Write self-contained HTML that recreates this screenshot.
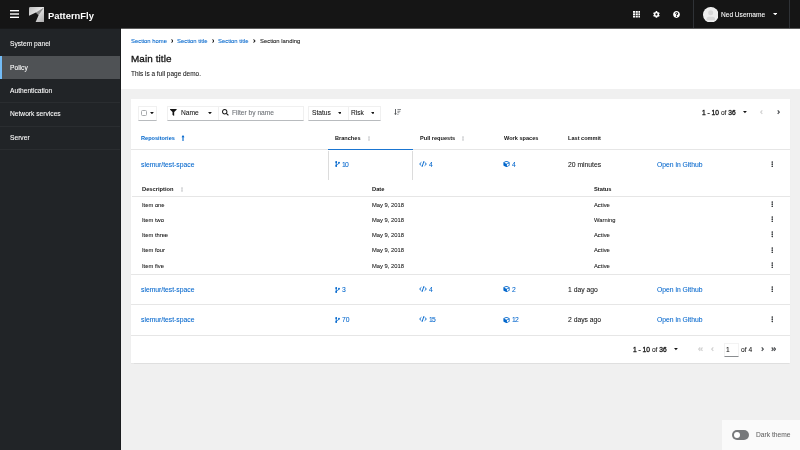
<!DOCTYPE html>
<html><head><meta charset="utf-8">
<style>
*{margin:0;padding:0;box-sizing:border-box}
html,body{width:800px;height:450px;overflow:hidden;-webkit-font-smoothing:antialiased;background:#f0f0f0;font-family:"Liberation Sans",sans-serif;color:#151515}
.a{position:absolute}
.t{position:absolute;white-space:nowrap;line-height:1;will-change:transform;-webkit-text-stroke:0.07px currentColor}
.b{font-weight:700;-webkit-text-stroke:0}
.lk{color:#0066cc}
svg{position:absolute;display:block}
#hdr{left:0;top:0;width:800px;height:28px;background:#151515}
#side{left:0;top:28px;width:121px;height:422px;background:#212427}
#sec{left:121px;top:28px;width:679px;height:61px;background:#fff}
#card{left:131px;top:99px;width:659px;height:264px;background:#fff;box-shadow:0 0.5px 1px rgba(3,3,3,.07),0 0 0.5px rgba(3,3,3,.05)}
.sb{color:#fff;font-size:6.67px}
.sep{position:absolute;left:0;width:120px;height:1px;background:#2a2d30}
.tog{position:absolute;border:0.5px solid #f0f0f0;border-bottom:1px solid #b8bbbe;height:15px}
.th{font-size:5.6px;font-weight:700;-webkit-text-stroke:0!important}
.row{font-size:6.77px}
.hl{position:absolute;height:1px;background:#e6e6e6}
.sm{font-size:5.8px}
.md{-webkit-text-stroke:0.3px currentColor}
</style></head><body>
<!-- header -->
<div id="hdr" class="a">
  <svg style="left:10px;top:10px" width="9" height="8" viewBox="0 0 9 8"><rect x="0" y="0" width="9" height="1.4" fill="#fff"/><rect x="0" y="3.3" width="9" height="1.4" fill="#fff"/><rect x="0" y="6.6" width="9" height="1.4" fill="#fff"/></svg>
  <svg style="left:28.6px;top:6.9px" width="15.7" height="15.4" viewBox="0 0 15.7 15.4">
    <defs><linearGradient id="lg" x1="0" y1="0" x2="1" y2="1"><stop offset="0" stop-color="#b9b9b9"/><stop offset="0.45" stop-color="#e6e6e6"/><stop offset="1" stop-color="#a8a8a8"/></linearGradient></defs>
    <rect x="0" y="0" width="15.7" height="15.4" rx="1.2" fill="url(#lg)"/>
    <path d="M6.9 5.4L15 0.5 9.6 8.3Z" fill="#8c8c8c"/>
    <path d="M-0.1 8.8L6.9 5.4 9.6 8.3 6.4 15.5H-0.1Z" fill="#151515"/>
  </svg>
  <div class="t b" style="left:47.9px;top:11.2px;font-size:9.4px;color:#fff">PatternFly</div>
  <svg style="left:632.5px;top:11px" width="7.5" height="6.5" viewBox="0 0 7.5 6.5" fill="#fff">
    <rect x="0" y="0" width="2.1" height="1.8"/><rect x="2.7" y="0" width="2.1" height="1.8"/><rect x="5.4" y="0" width="2.1" height="1.8"/>
    <rect x="0" y="2.35" width="2.1" height="1.8"/><rect x="2.7" y="2.35" width="2.1" height="1.8"/><rect x="5.4" y="2.35" width="2.1" height="1.8"/>
    <rect x="0" y="4.7" width="2.1" height="1.8"/><rect x="2.7" y="4.7" width="2.1" height="1.8"/><rect x="5.4" y="4.7" width="2.1" height="1.8"/>
  </svg>
  <svg style="left:652.8px;top:10.8px" width="6.9" height="6.9" viewBox="0 0 512 512"><path fill="#fff" d="M487.4 315.7l-42.6-24.6c4.3-23.2 4.3-47 0-70.2l42.6-24.6c4.9-2.8 7.1-8.6 5.5-14-11.1-35.6-30-67.8-54.7-94.6-3.8-4.1-10-5.1-14.8-2.3L380.8 110c-17.9-15.4-38.5-27.3-60.8-35.1V25.8c0-5.6-3.9-10.5-9.4-11.7-36.7-8.2-74.3-7.8-109.2 0-5.5 1.2-9.4 6.1-9.4 11.7V75c-22.2 7.9-42.8 19.8-60.8 35.1L88.7 85.5c-4.9-2.8-11-1.9-14.8 2.3-24.7 26.7-43.6 58.9-54.7 94.6-1.7 5.4.6 11.2 5.5 14L67.3 221c-4.3 23.2-4.3 47 0 70.2l-42.6 24.6c-4.9 2.8-7.1 8.600-5.5 14 11.1 35.6 30 67.8 54.7 94.6 3.8 4.1 10 5.1 14.8 2.3l42.6-24.6c17.9 15.4 38.5 27.3 60.8 35.1v49.2c0 5.6 3.9 10.5 9.4 11.7 36.7 8.2 74.3 7.8 109.2 0 5.5-1.2 9.4-6.1 9.4-11.7v-49.2c22.2-7.9 42.8-19.8 60.8-35.1l42.6 24.6c4.9 2.8 11 1.9 14.8-2.3 24.7-26.7 43.6-58.9 54.7-94.6 1.5-5.5-.7-11.3-5.6-14.1zM256 336c-44.1 0-80-35.9-80-80s35.9-80 80-80 80 35.9 80 80-35.9 80-80 80z"/></svg>
  <svg style="left:673px;top:11px" width="7" height="7" viewBox="0 0 512 512"><path fill="#fff" d="M504 256c0 136.997-111.043 248-248 248S8 392.997 8 256C8 119.083 119.043 8 256 8s248 111.083 248 248zM262.655 90c-54.497 0-89.255 22.957-116.549 63.758-3.536 5.286-2.353 12.415 2.715 16.258l34.699 26.31c5.205 3.947 12.621 3.008 16.665-2.122 17.864-22.658 30.113-35.797 57.303-35.797 20.429 0 45.698 13.148 45.698 32.958 0 14.976-12.363 22.667-32.534 33.976C247.128 238.528 216 254.941 216 296v4c0 6.627 5.373 12 12 12h56c6.627 0 12-5.373 12-12v-1.333c0-28.462 83.186-29.647 83.186-106.667 0-58.002-60.165-102-116.531-102zM256 338c-25.365 0-46 20.635-46 46 0 25.364 20.635 46 46 46s46-20.636 46-46c0-25.365-20.635-46-46-46z"/></svg>
  <div class="a" style="left:693px;top:0;width:0.6px;height:28px;background:#2f3236"></div>
  <div class="a" style="left:789px;top:0;width:0.6px;height:28px;background:#2f3236"></div>
  <svg style="left:702.7px;top:6.5px" width="15.6" height="15.6" viewBox="0 0 36 36"><circle cx="18" cy="18" r="18" fill="#f5f5f5"/><circle cx="18" cy="18" r="16.5" fill="#ededed"/><circle cx="17.7" cy="13.5" r="5.8" fill="#d8d8d8"/><path d="M8 30.5c0-6 2-8 5-8h10c3 0 5 2 5 8z" fill="#d8d8d8"/></svg>
  <div class="t" style="left:721.4px;top:12px;font-size:6.57px;color:#fff">Ned Username</div>
  <svg style="left:772.5px;top:13px" width="4.5" height="2.4" viewBox="0 0 10 5"><path d="M0 0h10L5 5z" fill="#fff"/></svg>
</div>
<div class="a" style="left:0;top:28px;width:800px;height:1px;background:rgba(21,21,21,.7);z-index:5"></div>
<!-- sidebar -->
<div id="side" class="a">
  <div class="a" style="left:0;top:27.8px;width:121px;height:23.3px;background:#4f5255"></div>
  <div class="a" style="left:0;top:27.8px;width:2px;height:23.3px;background:#73bcf7"></div>
  <div class="sep" style="top:73.6px"></div>
  <div class="sep" style="top:97.6px"></div>
  <div class="sep" style="top:121.2px"></div>
  <div class="a" style="left:120px;top:0;width:1px;height:422px;background:#1a1c1e"></div>
</div>
<div class="t sb" style="left:9.8px;top:41.30px">System panel</div>
<div class="t sb" style="left:9.8px;top:64.60px">Policy</div>
<div class="t sb" style="left:9.8px;top:88.00px">Authentication</div>
<div class="t sb" style="left:9.8px;top:111.30px">Network services</div>
<div class="t sb" style="left:9.8px;top:134.70px">Server</div>
<!-- page section -->
<div id="sec" class="a"></div>
<div class="t lk" style="left:130.6px;top:38.5px;font-size:5.9px">Section home</div>
<div class="t lk" style="left:176.9px;top:38.5px;font-size:5.9px">Section title</div>
<div class="t lk" style="left:218.2px;top:38.5px;font-size:5.9px">Section title</div>
<div class="t" style="left:259.5px;top:38.5px;font-size:5.9px">Section landing</div>
<svg style="left:170.6px;top:39.2px" width="2.8" height="4" viewBox="0 0 256 350"><path fill="#151515" d="M224.3 192l-136 136c-9.4 9.4-24.6 9.4-33.9 0l-22.6-22.6c-9.4-9.4-9.4-24.6 0-33.9l96.4-96.4-96.4-96.4c-9.4-9.4-9.4-24.6 0-33.9L54.3 22c9.4-9.4 24.6-9.4 33.9 0l136 136c9.5 9.4 9.5 24.6.1 34z"/></svg>
<svg style="left:211.6px;top:39.2px" width="2.8" height="4" viewBox="0 0 256 350"><path fill="#151515" d="M224.3 192l-136 136c-9.4 9.4-24.6 9.4-33.9 0l-22.6-22.6c-9.4-9.4-9.4-24.6 0-33.9l96.4-96.4-96.4-96.4c-9.4-9.4-9.4-24.6 0-33.9L54.3 22c9.4-9.4 24.6-9.4 33.9 0l136 136c9.5 9.4 9.5 24.6.1 34z"/></svg>
<svg style="left:253px;top:39.2px" width="2.8" height="4" viewBox="0 0 256 350"><path fill="#151515" d="M224.3 192l-136 136c-9.4 9.4-24.6 9.4-33.9 0l-22.6-22.6c-9.4-9.4-9.4-24.6 0-33.9l96.4-96.4-96.4-96.4c-9.4-9.4-9.4-24.6 0-33.9L54.3 22c9.4-9.4 24.6-9.4 33.9 0l136 136c9.5 9.4 9.5 24.6.1 34z"/></svg>
<div class="t" style="left:131.1px;top:54px;font-size:9.9px;-webkit-text-stroke:0.32px #151515;letter-spacing:0.1px">Main title</div>
<div class="t" style="left:131px;top:70.7px;font-size:6.46px">This is a full page demo.</div>
<!-- card -->
<div id="card" class="a"></div>
<div class="tog" style="left:137.5px;top:105.5px;width:19.5px"></div>
<div class="a" style="left:140.5px;top:110.2px;width:6.2px;height:6px;border:0.6px solid #a8abae;border-radius:1.5px;background:#fff"></div>
<svg style="left:149.9px;top:111.5px" width="3.9" height="2.3" viewBox="0 0 10 6"><path d="M0 0h10L5 6z" fill="#151515"/></svg>
<div class="tog" style="left:167.2px;top:105.5px;width:137.3px"></div>
<div class="a" style="left:218.2px;top:105.5px;width:0.4px;height:14px;background:#f0f0f0"></div>
<svg style="left:170.2px;top:108.9px" width="6.7" height="6.9" viewBox="0 0 512 512"><path fill="#151515" d="M487.976 0H24.028C2.71 0-8.047 25.866 7.058 40.971L192 225.941V432c0 7.831 3.821 15.170 10.237 19.662l80 55.980C298.020 518.690 320 507.493 320 487.980V225.941l184.947-184.970C520.021 25.896 509.338 0 487.976 0z"/></svg>
<div class="t" style="left:180.5px;top:110.3px;font-size:6.67px">Name</div>
<svg style="left:208px;top:111.6px" width="3.9" height="2.3" viewBox="0 0 10 6"><path d="M0 0h10L5 6z" fill="#151515"/></svg>
<svg style="left:222px;top:109px" width="6.7" height="6.7" viewBox="0 0 512 512"><path fill="#151515" d="M505 442.7L405.3 343c-4.5-4.5-10.6-7-17-7H372c27.6-35.3 44-79.7 44-128C416 93.1 322.9 0 208 0S0 93.1 0 208s93.1 208 208 208c48.3 0 92.7-16.4 128-44v16.3c0 6.4 2.5 12.5 7 17l99.7 99.7c9.4 9.4 24.6 9.4 33.900 0l28.3-28.3c9.4-9.4 9.4-24.6.1-34zM208 336c-70.7 0-128-57.2-128-128 0-70.7 57.200-128 128-128 70.7 0 128 57.2 128 128 0 70.7-57.2 128-128 128z"/></svg>
<div class="t" style="left:231.7px;top:110.3px;font-size:6.63px;color:#6a6e73">Filter by name</div>
<div class="tog" style="left:308.2px;top:105.5px;width:72.5px"></div>
<div class="a" style="left:348px;top:105.5px;width:0.4px;height:14px;background:#f0f0f0"></div>
<div class="t" style="left:311.7px;top:110.3px;font-size:6.67px">Status</div>
<svg style="left:337.6px;top:111.6px" width="3.9" height="2.3" viewBox="0 0 10 6"><path d="M0 0h10L5 6z" fill="#151515"/></svg>
<div class="t" style="left:351.3px;top:110.3px;font-size:6.67px">Risk</div>
<svg style="left:370.5px;top:111.6px" width="3.9" height="2.3" viewBox="0 0 10 6"><path d="M0 0h10L5 6z" fill="#151515"/></svg>
<svg style="left:393.8px;top:109px" width="7.4" height="6" viewBox="0 0 7.4 6"><path d="M1.05 0h0.9v4.5H3L1.5 6 0 4.5h1.05z" fill="#4f5255"/><path d="M3.4 0h4v1.1h-4zM3.4 1.65h3v1.05h-3zM3.4 3.3h2v1.05h-2zM3.4 4.9h1v1.05h-1z" fill="#8a8d90"/></svg>
<div class="t" style="left:702px;top:110.3px;font-size:6.67px"><span class="md">1 - 10</span> of <span class="md">36</span></div>
<svg style="left:742.9px;top:111.3px" width="3.9" height="2.4" viewBox="0 0 10 6"><path d="M0 0h10L5 6z" fill="#151515"/></svg>
<svg style="left:760.2px;top:110.3px" width="3" height="4.4" viewBox="0 0 6 8.8"><path d="M4.6 0.9L1.4 4.4 4.6 7.9" stroke="#d2d2d2" stroke-width="2.5" fill="none"/></svg>
<svg style="left:776.9px;top:110.3px" width="3" height="4.4" viewBox="0 0 6 8.8"><path d="M1.4 0.9L4.6 4.4 1.4 7.9" stroke="#4f5255" stroke-width="2.5" fill="none"/></svg>
<div class="t th lk" style="left:141px;top:136.00px">Repositories</div>
<svg style="left:180px;top:134.7px" width="6" height="6" viewBox="0 0 6 6"><path d="M3 0L4.5 2.3H1.5z" fill="#0066cc"/><rect x="2.45" y="2" width="1.1" height="4" fill="#0066cc"/></svg>
<div class="t th" style="left:335px;top:136.00px">Branches</div>
<svg style="left:368px;top:135.5px" width="2" height="5" viewBox="0 0 4 10"><path d="M2 0L4 2.5H2.8V7.5H4L2 10 0 7.5H1.2V2.5H0z" fill="#b8bbbe"/></svg>
<div class="t th" style="left:419.7px;top:136.00px">Pull requests</div>
<svg style="left:462px;top:135.5px" width="2" height="5" viewBox="0 0 4 10"><path d="M2 0L4 2.5H2.8V7.5H4L2 10 0 7.5H1.2V2.5H0z" fill="#b8bbbe"/></svg>
<div class="t th" style="left:503.7px;top:136.00px">Work spaces</div>
<div class="t th" style="left:567.5px;top:136.00px">Last commit</div>
<div class="hl" style="left:131px;top:149px;width:659px"></div>
<div class="t row lk" style="left:141px;top:161.94px">siemur/test-space</div>
<svg style="left:334.8px;top:161.40px" width="5.2" height="6" viewBox="0 0 10 12"><g fill="#0066cc"><circle cx="2.2" cy="1.9" r="1.9"/><circle cx="2.2" cy="10.1" r="1.9"/><circle cx="7.8" cy="3.4" r="1.8"/><rect x="1.25" y="1.9" width="1.9" height="8.2"/></g><path d="M7.8 3.6C7.8 6.5 3.5 6.5 2.2 8.5" fill="none" stroke="#0066cc" stroke-width="1.7"/></svg>
<div class="t row lk" style="left:341.5px;top:161.94px;letter-spacing:-0.7px">10</div>
<svg style="left:419.3px;top:161.10px" width="8" height="6" viewBox="0 0 16 12"><g fill="none" stroke="#0066cc" stroke-width="1.9" stroke-linecap="round" stroke-linejoin="round"><path d="M4.2 3.2L1.2 6 4.2 8.8M11.8 3.2L14.8 6 11.8 8.8M9.6 1L6.4 11"/></g></svg>
<div class="t row lk" style="left:429.3px;top:161.94px">4</div>
<svg style="left:503.1px;top:161.30px" width="7" height="6.2" viewBox="0 0 512 512"><path fill="#0066cc" d="M239.1 6.3l-208 78c-18.7 7-31.1 24.9-31.1 44.9v225.1c0 18.2 10.3 34.8 26.5 42.9l208 104c13.5 6.8 29.4 6.8 42.9 0l208-104c16.3-8.1 26.5-24.8 26.5-42.9V129.300c0-20-12.4-37.9-31.1-44.9l-208-78C262 2.2 250 2.2 239.100 6.3zM256 68.4l192 72v1.1l-192 78-192-78v-1.1l192-72zm32 356V275.5l160-65v133.9l-160 80z"/></svg>
<div class="t row lk" style="left:512.2px;top:161.94px">4</div>
<div class="t row" style="left:567.5px;top:161.94px">20 minutes</div>
<div class="t row lk" style="left:657.1px;top:161.94px">Open in Github</div>
<svg style="left:770.8px;top:160.90px" width="2.6" height="6.4" viewBox="0 0 6 14"><circle cx="3" cy="2" r="2" fill="#3c3f42"/><circle cx="3" cy="7" r="2" fill="#3c3f42"/><circle cx="3" cy="12" r="2" fill="#3c3f42"/></svg>
<div class="a" style="left:328px;top:148.9px;width:84.7px;height:1.6px;background:#1a75d1"></div>
<div class="a" style="left:328px;top:150.5px;width:0.5px;height:29px;background:#dcdcdc"></div>
<div class="a" style="left:412.3px;top:150.5px;width:0.5px;height:29px;background:#dcdcdc"></div>
<div class="t sm b" style="left:142.2px;top:186.90px;font-size:5.73px">Description</div>
<svg style="left:180.6px;top:186.5px" width="2" height="5" viewBox="0 0 4 10"><path d="M2 0L4 2.5H2.8V7.5H4L2 10 0 7.5H1.2V2.5H0z" fill="#b8bbbe"/></svg>
<div class="t sm b" style="left:372.4px;top:186.90px;font-size:5.73px">Date</div>
<div class="t sm b" style="left:593.5px;top:186.90px;font-size:5.73px">Status</div>
<div class="hl" style="left:132px;top:196px;width:658px"></div>
<div class="t sm" style="left:142.2px;top:202.80px">Item one</div>
<div class="t sm" style="left:372.2px;top:202.80px">May 9, 2018</div>
<div class="t sm" style="left:593.5px;top:202.80px">Active</div>
<svg style="left:770.8px;top:200.90px" width="2.6" height="6.4" viewBox="0 0 6 14"><circle cx="3" cy="2" r="2" fill="#3c3f42"/><circle cx="3" cy="7" r="2" fill="#3c3f42"/><circle cx="3" cy="12" r="2" fill="#3c3f42"/></svg>
<div class="t sm" style="left:142.2px;top:217.80px">Item two</div>
<div class="t sm" style="left:372.2px;top:217.80px">May 9, 2018</div>
<div class="t sm" style="left:593.5px;top:217.80px">Warning</div>
<svg style="left:770.8px;top:215.90px" width="2.6" height="6.4" viewBox="0 0 6 14"><circle cx="3" cy="2" r="2" fill="#3c3f42"/><circle cx="3" cy="7" r="2" fill="#3c3f42"/><circle cx="3" cy="12" r="2" fill="#3c3f42"/></svg>
<div class="t sm" style="left:142.2px;top:233.20px">Item three</div>
<div class="t sm" style="left:372.2px;top:233.20px">May 9, 2018</div>
<div class="t sm" style="left:593.5px;top:233.20px">Active</div>
<svg style="left:770.8px;top:231.30px" width="2.6" height="6.4" viewBox="0 0 6 14"><circle cx="3" cy="2" r="2" fill="#3c3f42"/><circle cx="3" cy="7" r="2" fill="#3c3f42"/><circle cx="3" cy="12" r="2" fill="#3c3f42"/></svg>
<div class="t sm" style="left:142.2px;top:248.40px">Item four</div>
<div class="t sm" style="left:372.2px;top:248.40px">May 9, 2018</div>
<div class="t sm" style="left:593.5px;top:248.40px">Active</div>
<svg style="left:770.8px;top:246.50px" width="2.6" height="6.4" viewBox="0 0 6 14"><circle cx="3" cy="2" r="2" fill="#3c3f42"/><circle cx="3" cy="7" r="2" fill="#3c3f42"/><circle cx="3" cy="12" r="2" fill="#3c3f42"/></svg>
<div class="t sm" style="left:142.2px;top:263.90px">Item five</div>
<div class="t sm" style="left:372.2px;top:263.90px">May 9, 2018</div>
<div class="t sm" style="left:593.5px;top:263.90px">Active</div>
<svg style="left:770.8px;top:262.00px" width="2.6" height="6.4" viewBox="0 0 6 14"><circle cx="3" cy="2" r="2" fill="#3c3f42"/><circle cx="3" cy="7" r="2" fill="#3c3f42"/><circle cx="3" cy="12" r="2" fill="#3c3f42"/></svg>
<div class="hl" style="left:131px;top:273.5px;width:659px"></div>
<div class="t row lk" style="left:141px;top:287.04px">siemur/test-space</div>
<svg style="left:334.8px;top:286.50px" width="5.2" height="6" viewBox="0 0 10 12"><g fill="#0066cc"><circle cx="2.2" cy="1.9" r="1.9"/><circle cx="2.2" cy="10.1" r="1.9"/><circle cx="7.8" cy="3.4" r="1.8"/><rect x="1.25" y="1.9" width="1.9" height="8.2"/></g><path d="M7.8 3.6C7.8 6.5 3.5 6.5 2.2 8.5" fill="none" stroke="#0066cc" stroke-width="1.7"/></svg>
<div class="t row lk" style="left:342.1px;top:287.04px">3</div>
<svg style="left:419.3px;top:286.20px" width="8" height="6" viewBox="0 0 16 12"><g fill="none" stroke="#0066cc" stroke-width="1.9" stroke-linecap="round" stroke-linejoin="round"><path d="M4.2 3.2L1.2 6 4.2 8.8M11.8 3.2L14.8 6 11.8 8.8M9.6 1L6.4 11"/></g></svg>
<div class="t row lk" style="left:429.3px;top:287.04px">4</div>
<svg style="left:503.1px;top:286.40px" width="7" height="6.2" viewBox="0 0 512 512"><path fill="#0066cc" d="M239.1 6.3l-208 78c-18.7 7-31.1 24.9-31.1 44.9v225.1c0 18.2 10.3 34.8 26.5 42.9l208 104c13.5 6.8 29.4 6.8 42.9 0l208-104c16.3-8.1 26.5-24.8 26.5-42.9V129.300c0-20-12.4-37.9-31.1-44.9l-208-78C262 2.2 250 2.2 239.100 6.3zM256 68.4l192 72v1.1l-192 78-192-78v-1.1l192-72zm32 356V275.5l160-65v133.9l-160 80z"/></svg>
<div class="t row lk" style="left:512.2px;top:287.04px">2</div>
<div class="t row" style="left:567.5px;top:287.04px">1 day ago</div>
<div class="t row lk" style="left:657.1px;top:287.04px">Open in Github</div>
<svg style="left:770.8px;top:286.00px" width="2.6" height="6.4" viewBox="0 0 6 14"><circle cx="3" cy="2" r="2" fill="#3c3f42"/><circle cx="3" cy="7" r="2" fill="#3c3f42"/><circle cx="3" cy="12" r="2" fill="#3c3f42"/></svg>
<div class="hl" style="left:131px;top:304px;width:659px"></div>
<div class="t row lk" style="left:141px;top:317.24px">siemur/test-space</div>
<svg style="left:334.8px;top:316.70px" width="5.2" height="6" viewBox="0 0 10 12"><g fill="#0066cc"><circle cx="2.2" cy="1.9" r="1.9"/><circle cx="2.2" cy="10.1" r="1.9"/><circle cx="7.8" cy="3.4" r="1.8"/><rect x="1.25" y="1.9" width="1.9" height="8.2"/></g><path d="M7.8 3.6C7.8 6.5 3.5 6.5 2.2 8.5" fill="none" stroke="#0066cc" stroke-width="1.7"/></svg>
<div class="t row lk" style="left:342.1px;top:317.24px">70</div>
<svg style="left:419.3px;top:316.40px" width="8" height="6" viewBox="0 0 16 12"><g fill="none" stroke="#0066cc" stroke-width="1.9" stroke-linecap="round" stroke-linejoin="round"><path d="M4.2 3.2L1.2 6 4.2 8.8M11.8 3.2L14.8 6 11.8 8.8M9.6 1L6.4 11"/></g></svg>
<div class="t row lk" style="left:428.8px;top:317.24px;letter-spacing:-0.7px">15</div>
<svg style="left:503.1px;top:316.60px" width="7" height="6.2" viewBox="0 0 512 512"><path fill="#0066cc" d="M239.1 6.3l-208 78c-18.7 7-31.1 24.9-31.1 44.9v225.1c0 18.2 10.3 34.8 26.5 42.9l208 104c13.5 6.8 29.4 6.8 42.9 0l208-104c16.3-8.1 26.5-24.8 26.5-42.9V129.300c0-20-12.4-37.9-31.1-44.9l-208-78C262 2.2 250 2.2 239.100 6.3zM256 68.4l192 72v1.1l-192 78-192-78v-1.1l192-72zm32 356V275.5l160-65v133.9l-160 80z"/></svg>
<div class="t row lk" style="left:511.7px;top:317.24px;letter-spacing:-0.7px">12</div>
<div class="t row" style="left:567.5px;top:317.24px">2 days ago</div>
<div class="t row lk" style="left:657.1px;top:317.24px">Open in Github</div>
<svg style="left:770.8px;top:316.20px" width="2.6" height="6.4" viewBox="0 0 6 14"><circle cx="3" cy="2" r="2" fill="#3c3f42"/><circle cx="3" cy="7" r="2" fill="#3c3f42"/><circle cx="3" cy="12" r="2" fill="#3c3f42"/></svg>
<div class="hl" style="left:131px;top:334.6px;width:659px"></div>
<div class="t" style="left:632.8px;top:347.1px;font-size:6.67px"><span class="md">1 - 10</span> of <span class="md">36</span></div>
<svg style="left:673.8px;top:348.4px" width="3.9" height="2.3" viewBox="0 0 10 6"><path d="M0 0h10L5 6z" fill="#151515"/></svg>
<svg style="left:698.1px;top:347.2px" width="5.2" height="4.4" viewBox="0 0 10.6 8.8"><path d="M4.6 0.9L1.4 4.4 4.6 7.9M9.2 0.9L6 4.4 9.2 7.9" stroke="#d2d2d2" stroke-width="2.5" fill="none"/></svg>
<svg style="left:710.6px;top:347.2px" width="3" height="4.4" viewBox="0 0 6 8.8"><path d="M4.6 0.9L1.4 4.4 4.6 7.9" stroke="#d2d2d2" stroke-width="2.5" fill="none"/></svg>
<div class="a" style="left:723.9px;top:342.7px;width:14.7px;height:14px;border:0.5px solid #f3f3f3;border-bottom:0.8px solid #8a8d90"></div>
<div class="t" style="left:726.4px;top:347.1px;font-size:6.67px">1</div>
<div class="t" style="left:740.5px;top:347.1px;font-size:6.67px">of 4</div>
<svg style="left:760.8px;top:347.2px" width="3" height="4.4" viewBox="0 0 6 8.8"><path d="M1.4 0.9L4.6 4.4 1.4 7.9" stroke="#4f5255" stroke-width="2.5" fill="none"/></svg>
<svg style="left:771px;top:347.2px" width="5.2" height="4.4" viewBox="0 0 10.6 8.8"><path d="M1.4 0.9L4.6 4.4 1.4 7.9M6 0.9L9.2 4.4 6 7.9" stroke="#4f5255" stroke-width="2.5" fill="none"/></svg>
<div class="a" style="left:722px;top:420px;width:78px;height:30px;background:#fafafa"></div>
<div class="a" style="left:732px;top:430px;width:16.8px;height:10px;border-radius:5px;background:#77797b"></div>
<div class="a" style="left:733.7px;top:432px;width:6px;height:6px;border-radius:50%;background:#fff"></div>
<div class="t" style="left:755.5px;top:431.8px;font-size:6.66px;color:#666">Dark theme</div>
</body></html>
